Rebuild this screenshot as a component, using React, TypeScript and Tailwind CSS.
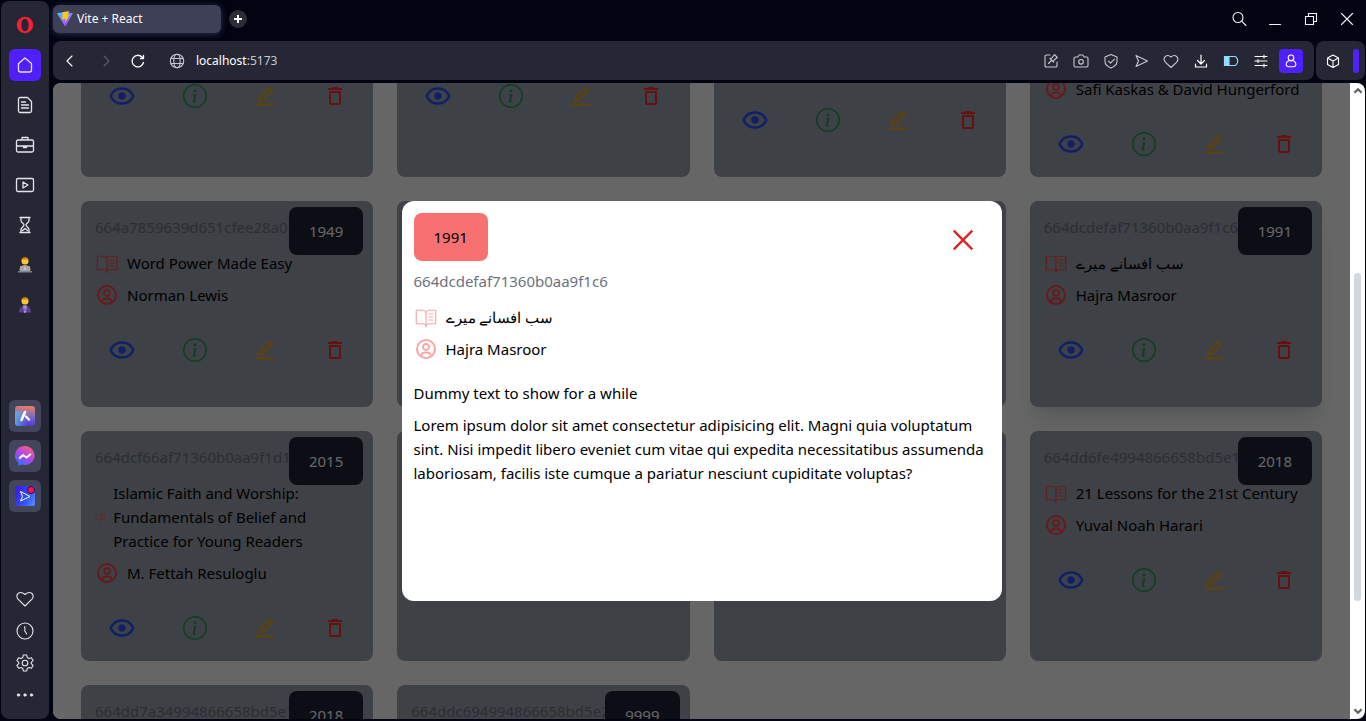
import React, { useLayoutEffect, useRef } from "react";
import { AiOutlineClose, AiOutlineEdit } from "react-icons/ai";
import { BiShow, BiUserCircle } from "react-icons/bi";
import { BsInfoCircle } from "react-icons/bs";
import { MdOutlineDelete } from "react-icons/md";
import { PiBookOpenTextLight } from "react-icons/pi";

type Book = { id: string; year: string; title: string; author: string; raised?: boolean };

const BOOKS: Book[] = [
  { id: "664a74f1639d651cfee289f2", year: "2018", title: "Atomic Habits", author: "James Clear" },
  { id: "664a7593639d651cfee289f6", year: "1936", title: "Deep Work", author: "Cal Newport" },
  { id: "664a7655639d651cfee289fa", year: "1989", title: "How to Win Friends and Influence People", author: "Dale Carnegie" },
  {
    id: "664a76f9639d651cfee289fe",
    year: "2016",
    title: "The Qur'an: A Contemporary Understanding with References to the Bible in English",
    author: "Safi Kaskas & David Hungerford",
  },
  { id: "664a7859639d651cfee28a01", year: "1949", title: "Word Power Made Easy", author: "Norman Lewis" },
  { id: "664a7901639d651cfee28a05", year: "1988", title: "The Alchemist: A Fable About Following Your Dream", author: "Paulo Coelho" },
  { id: "664a79b2639d651cfee28a09", year: "2011", title: "Thinking, Fast and Slow", author: "Daniel Kahneman" },
  { id: "664dcdefaf71360b0aa9f1c6", year: "1991", title: "سب افسانے میرے", author: "Hajra Masroor", raised: true },
  {
    id: "664dcf66af71360b0aa9f1d1",
    year: "2015",
    title: "Islamic Faith and Worship: Fundamentals of Belief and Practice for Young Readers",
    author: "M. Fettah Resuloglu",
  },
  { id: "664dd01faf71360b0aa9f1d5", year: "2014", title: "Sapiens", author: "Yuval Noah Harari" },
  { id: "664dd1c2af71360b0aa9f1d9", year: "2016", title: "Homo Deus", author: "Yuval Noah Harari" },
  { id: "664dd6fe4994866658bd5e10", year: "2018", title: "21 Lessons for the 21st Century", author: "Yuval Noah Harari" },
  { id: "664dd7a34994866658bd5e14", year: "2018", title: "Educated", author: "Tara Westover" },
  { id: "664ddc694994866658bd5e21", year: "9999", title: "Untitled", author: "Unknown" },
];

function Glyph({ children, className = "size-5" }: { children: React.ReactNode; className?: string }) {
  return (
    <svg
      viewBox="0 0 20 20"
      fill="none"
      stroke="currentColor"
      strokeWidth="1.1"
      strokeLinecap="round"
      strokeLinejoin="round"
      aria-hidden="true"
      className={className}
    >
      {children}
    </svg>
  );
}

const HEART = "M10 17 3 10.200C-.5 6 4.500.8 10 5.500 15.500.8 20.500 6 17 10.200Z";

function BookLines({ book, tone }: { book: Book; tone: string }) {
  return (
    <>
      <div className="flex items-center gap-x-2">
        <PiBookOpenTextLight className={`text-2xl ${tone}`} />
        <h2 className="my-1">{book.title}</h2>
      </div>
      <div className="flex items-center gap-x-2">
        <BiUserCircle className={`text-2xl ${tone}`} />
        <h2 className="my-1">{book.author}</h2>
      </div>
    </>
  );
}

function BookCard({ book }: { book: Book }) {
  return (
    <article
      className={`relative rounded-lg border-2 border-[#9ca3af] bg-[#9ca3af] px-3 py-1 ${book.raised ? "shadow-xl" : ""}`}
    >
      <h2 className="absolute top-1 right-2 rounded-lg bg-[#1c2436] px-5 py-3 text-white">{book.year}</h2>
      <h4 className="my-2 text-[#6b7280]">{book.id}</h4>
      <BookLines book={book} tone="text-[#ff4444]" />
      <div className="mt-3 flex items-center justify-between p-3">
        <button aria-label="Quick view">
          <BiShow className="text-3xl text-[#2850ff]" />
        </button>
        <a href="#details" aria-label="Details">
          <BsInfoCircle className="text-2xl text-[#2a9c58]" />
        </a>
        <a href="#edit" aria-label="Edit">
          <AiOutlineEdit className="text-2xl text-[#f5a810]" />
        </a>
        <a href="#delete" aria-label="Delete">
          <MdOutlineDelete className="text-2xl text-[#ff2a2a]" />
        </a>
      </div>
    </article>
  );
}

function BookModal({ book }: { book: Book }) {
  return (
    <div className="absolute inset-0 z-10 flex items-center justify-center bg-black/60">
      <div role="dialog" aria-label={book.title} className="relative h-[400px] w-[600px] rounded-xl bg-white p-3">
        <button aria-label="Close" className="absolute top-6 right-6">
          <AiOutlineClose className="text-3xl text-[#dc2626]" />
        </button>
        <h2 className="w-fit rounded-lg bg-[#f87171] px-5 py-3">{book.year}</h2>
        <h4 className="my-2 text-[#6b7280]">{book.id}</h4>
        <BookLines book={book} tone="text-[#fca5a5]" />
        <p className="mt-4">Dummy text to show for a while</p>
        <p className="my-2">
          Lorem ipsum dolor sit amet consectetur adipisicing elit. Magni quia voluptatum sint. Nisi impedit libero
          eveniet cum vitae qui expedita necessitatibus assumenda laboriosam, facilis iste cumque a pariatur nesciunt
          cupiditate voluptas?
        </p>
      </div>
    </div>
  );
}

function SideButton({ label, className = "", children }: { label: string; className?: string; children: React.ReactNode }) {
  return (
    <button aria-label={label} className={`flex size-8 items-center justify-center rounded-md ${className}`}>
      {children}
    </button>
  );
}

function Sidebar() {
  return (
    <nav aria-label="Browser sidebar" className="mx-px mt-px mb-0.5 flex w-12 shrink-0 flex-col items-center rounded-lg bg-[#252834] pb-2 text-[#e3e5ee]">
      <div className="flex flex-col items-center gap-2 pt-2">
        <SideButton label="Opera">
          <svg viewBox="0 0 20 20" className="size-5" aria-hidden="true">
            <path
              fill="#fa1e37"
              fillRule="evenodd"
              d="M10 1.800a8.200 8.200 0 1 0 0 16.400a8.200 8.200 0 1 0 0-16.400ZM10 3.800c2.300 0 3.600 2.800 3.600 6.200s-1.300 6.200-3.600 6.200-3.600-2.800-3.600-6.200S7.700 3.800 10 3.800Z"
            />
          </svg>
        </SideButton>
        <SideButton label="Home" className="bg-[#4f1fff]">
          <Glyph><path strokeWidth="1.300" d="m10 3 6.500 5.500V15a2 2 0 0 1-2 2h-9a2 2 0 0 1-2-2V8.500Z" /></Glyph>
        </SideButton>
        <SideButton label="Notes">
          <Glyph>
            <path strokeWidth="1.300" d="M5 2.500h7.500l4 4V16a1.500 1.500 0 0 1-1.500 1.500H5A1.500 1.500 0 0 1 3.500 16V4A1.500 1.500 0 0 1 5 2.500ZM6.500 7h4m-4 3h7m-7 3h7" />
          </Glyph>
        </SideButton>
        <SideButton label="Workspace">
          <Glyph>
            <path strokeWidth="1.300" d="M7 5V2.500h6V5M3 5h14a1.500 1.500 0 0 1 1.500 1.500v9A1.500 1.500 0 0 1 17 17H3a1.500 1.500 0 0 1-1.500-1.500v-9A1.500 1.500 0 0 1 3 5Zm-1.500 6h17M8.500 11v1.500h3V11" />
          </Glyph>
        </SideButton>
        <SideButton label="Player">
          <Glyph>
            <path strokeWidth="1.300" d="M3 3.500h14A1.500 1.500 0 0 1 18.500 5v10a1.500 1.500 0 0 1-1.500 1.500H3A1.500 1.500 0 0 1 1.500 15V5A1.500 1.500 0 0 1 3 3.500ZM8 7v6l5-3Z" />
          </Glyph>
        </SideButton>
        <SideButton label="History timer">
          <Glyph>
            <path strokeWidth="1.300" d="M5 2.500h10M5 17.500h10M6 2.500v3c0 2 3 3 3 4.500s-3 2.500-3 4.500v3m8-15v3c0 2-3 3-3 4.500s3 2.500 3 4.500v3M7.500 15.500l2.500-2 2.500 2" />
          </Glyph>
        </SideButton>
        <SideButton label="Technologist workspace">
          <svg viewBox="0 0 16 16" className="size-4" aria-hidden="true">
            <circle cx="8" cy="4" r="3.500" fill="#ffc83d" />
            <path fill="#d67d00" d="M4.500 3.500C4.500-.8 11.500-.8 11.500 3.500L10.500 2.500h-5Z" />
            <path fill="#f9c23c" d="M2.500 13c0-6.500 11-6.500 11 0Z" />
            <path fill="#a5a5ad" d="M3 9h10v6H3Z" />
            <path fill="#82828b" d="M1 14h14v1.500H1Z" />
            <circle cx="8" cy="11.500" r="1" fill="#d8d8dc" />
          </svg>
        </SideButton>
        <SideButton label="Office workspace">
          <svg viewBox="0 0 16 16" className="size-4" aria-hidden="true">
            <circle cx="8" cy="4" r="3.500" fill="#ffc83d" />
            <path fill="#d67d00" d="M4.500 3.500C4.500-.8 11.500-.8 11.500 3.500L10.500 2.500h-5Z" />
            <path fill="#5f3f94" d="M2 15.500C2 6 14 6 14 15.500Z" />
            <path fill="#e8e4f4" d="m6.500 8 1.500 1 1.500-1-.5 7.500H7Z" />
            <path fill="#6b5fc3" d="M7.500 9h1l.5 5-1 1-1-1Z" />
          </svg>
        </SideButton>
      </div>
      <div className="mt-[79px] flex flex-col items-center gap-2">
        <SideButton label="Aria" className="bg-[#43465a]">
          <svg viewBox="0 0 20 20" className="size-5" aria-hidden="true">
            <defs>
              <linearGradient id="aria" x1="0.700" y1="0" x2="0.600" y2="1">
                <stop offset="0" stopColor="#ef7b5a" />
                <stop offset="0.500" stopColor="#7a6fc9" />
                <stop offset="1" stopColor="#5136d8" />
              </linearGradient>
              <linearGradient id="ariaEdge" x1="0" x2="0.600" y1="0" y2="0">
                <stop offset="0" stopColor="#5bb9e8" stopOpacity="0.800" />
                <stop offset="1" stopColor="#5bb9e8" stopOpacity="0" />
              </linearGradient>
            </defs>
            <rect width="20" height="20" rx="3" fill="url(#aria)" />
            <rect y="5" width="20" height="15" rx="3" fill="url(#ariaEdge)" />
            <path d="M10 6 6.500 14" stroke="#fff" strokeWidth="2.600" strokeLinecap="round" />
            <path d="m11 10.500 2.800 3" stroke="#fff" strokeWidth="2.400" strokeLinecap="round" />
          </svg>
        </SideButton>
        <SideButton label="Messenger" className="bg-[#43465a]">
          <svg viewBox="0 0 20 20" className="size-5" aria-hidden="true">
            <defs>
              <linearGradient id="msg" x1="0.800" y1="0" x2="0.200" y2="1">
                <stop offset="0" stopColor="#ff5f78" />
                <stop offset="0.500" stopColor="#b044e8" />
                <stop offset="1" stopColor="#1d7dff" />
              </linearGradient>
            </defs>
            <path fill="url(#msg)" d="M10 0a9.800 9.500 0 1 1-3 18.600L3.500 20v-3.200A9.800 9.500 0 0 1 10 0Z" />
            <path d="m4.800 12 3.200-3 3.500 2.500 3.700-3" fill="none" stroke="#fff" strokeWidth="2" strokeLinejoin="round" strokeLinecap="round" />
          </svg>
        </SideButton>
        <SideButton label="Flow" className="bg-[#43465a]">
          <svg viewBox="0 0 20 20" className="size-5" aria-hidden="true">
            <defs>
              <linearGradient id="flow" x1="0" y1="0.500" x2="1" y2="1">
                <stop offset="0" stopColor="#3a22e8" />
                <stop offset="0.500" stopColor="#2f55f5" />
                <stop offset="1" stopColor="#5e8cff" />
              </linearGradient>
            </defs>
            <rect width="20" height="20" rx="2" fill="url(#flow)" />
            <path d="M5.500 5.500 15 10.500 5.500 15l2-4.500Z" fill="none" stroke="#fff" strokeWidth="1" strokeLinejoin="round" />
            <circle cx="16" cy="4" r="3.500" fill="#ff1450" stroke="#1c1030" strokeWidth="1" />
          </svg>
        </SideButton>
      </div>
      <div className="mt-auto flex flex-col items-center">
        <SideButton label="Favourites"><Glyph><path d={HEART} /></Glyph></SideButton>
        <SideButton label="History">
          <Glyph><circle cx="10" cy="10" r="8" /><path d="M9.800 5.500V10l2 3" /></Glyph>
        </SideButton>
        <SideButton label="Settings">
          <Glyph>
            <circle cx="10" cy="10" r="2.800" />
            <path d="M8.300 2h3.400l.5 2.500 1.800 1 2.400-.8 1.700 2.900-1.900 1.700v1.400l1.900 1.700-1.700 2.900-2.400-.8-1.800 1-.5 2.500H8.300l-.5-2.500-1.800-1-2.400.8-1.700-2.900 1.900-1.700V9.300L1.900 7.600l1.700-2.900 2.400.8 1.800-1Z" />
          </Glyph>
        </SideButton>
        <SideButton label="More">
          <Glyph><g fill="currentColor" strokeWidth="0.600"><circle cx="3.500" cy="10" r="1.300" /><circle cx="10" cy="10" r="1.300" /><circle cx="16.500" cy="10" r="1.300" /></g></Glyph>
        </SideButton>
      </div>
    </nav>
  );
}

function TabBar() {
  return (
    <div className="flex h-[41px] items-center pr-[9px] text-[#f2f3f8]">
      <div className="mb-1 flex h-7 w-[168px] items-center gap-1 rounded-md bg-[#3d4056] px-1 text-xs text-white shadow-[0_1px_6px_#30334a]">
        <svg viewBox="0 0 16 16" className="size-4" aria-hidden="true">
          <defs>
            <linearGradient id="vite" x1="0" y1="0" x2="0.700" y2="1">
              <stop offset="0" stopColor="#41d1ff" />
              <stop offset="1" stopColor="#bd34fe" />
            </linearGradient>
          </defs>
          <path fill="url(#vite)" d="M0 2.300 8 1l8 1.300L8.200 15.800Z" />
          <path fill="#ffc61e" d="m5.500 1.200 6.500-1.200-1.500 4 2.300-.4L8 12l.8-4.200-3.600.7Z" />
        </svg>
        <span>Vite + React</span>
      </div>
      <button aria-label="New tab" className="mb-1 ml-2 flex size-[18px] items-center justify-center rounded-full bg-[#2b2d37]">
        <svg viewBox="0 0 8 8" className="size-2" fill="none" stroke="#fff" strokeWidth="2" aria-hidden="true">
          <path d="M4 0v8M0 4h8" />
        </svg>
      </button>
      <div className="mb-1 ml-auto flex gap-4">
        <button aria-label="Search tabs" className="flex size-5 items-center justify-center">
          <Glyph><circle cx="9" cy="8.500" r="5" /><path d="m12.700 12.200 4.300 4.300" /></Glyph>
        </button>
        <button aria-label="Minimize" className="flex size-5 items-center justify-center">
          <Glyph><path d="M4.500 15.500h11" /></Glyph>
        </button>
        <button aria-label="Restore" className="flex size-5 items-center justify-center">
          <Glyph><path strokeLinejoin="miter" d="M4.500 7.500h8v8h-8ZM7.500 7.500v-3h8v8h-3" /></Glyph>
        </button>
        <button aria-label="Close window" className="flex size-5 items-center justify-center">
          <Glyph><path d="m4.500 4.500 11 11m0-11-11 11" /></Glyph>
        </button>
      </div>
    </div>
  );
}

function AddressBar() {
  return (
    <div className="flex h-[39px] gap-0.5 pr-px text-[#c6c9d4]">
      <div className="flex flex-1 items-center rounded-lg bg-[#252834] pr-[11px] pl-[7px]">
        <div className="flex gap-3.5">
          <button aria-label="Back" className="text-white"><Glyph><path d="M12 5 7 10l5 5" /></Glyph></button>
          <button aria-label="Forward" className="text-[#5d606c]"><Glyph><path d="m10 5 5 5-5 5" /></Glyph></button>
          <button aria-label="Reload" className="text-white">
            <Glyph><path strokeWidth="1.300" d="M15.500 11.500A5.800 5.800 0 1 1 14 6l1.500 1.500M15.500 4.500v3h-3" /></Glyph>
          </button>
        </div>
        <Glyph className="ml-[19px] size-5">
          <circle cx="10" cy="10" r="6.700" /><ellipse cx="10" cy="10" rx="3.200" ry="6.700" /><path d="M4 7.500h12M4 12.500h12" />
        </Glyph>
        <a href="#location" aria-label="Address" className="ml-[9px] text-xs">
          <span className="text-white">localhost</span>:5173
        </a>
        <div className="ml-auto flex items-center gap-2">
          <div className="flex gap-2.5">
            <Glyph>
              <path d="M9 4H5.500A1.500 1.500 0 0 0 4 5.500V15a1 1 0 0 0 1 1h10a1 1 0 0 0 1-1v-4M7.500 12.500l2.500-2.500M9 7.500l3.500 3.500.8-2.200 3-2.300-2.800-2.800-2.300 3Z" />
            </Glyph>
            <Glyph>
              <path d="M4.500 6h2.300l1.400-2h3.600l1.400 2h2.300A1.500 1.500 0 0 1 17 7.500v7a1.500 1.500 0 0 1-1.500 1.500h-11A1.500 1.500 0 0 1 3 14.500v-7A1.500 1.500 0 0 1 4.500 6Z" /><circle cx="10" cy="10.800" r="2.300" />
            </Glyph>
            <Glyph><path d="M10 3.500 16 6v4.500c0 3-2.500 5-6 6.500-3.500-1.500-6-3.500-6-6.500V6Zm-2.500 6.700 2 2 4-4" /></Glyph>
            <Glyph><path d="M5 4.500 16.500 10 5 15.500 7.500 10Z" /></Glyph>
            <Glyph><path d="m10 16.500-5.500-5.200C1 7.500 5.500 2 10 6c4.500-4 9 1.500 5.500 5.300Z" /></Glyph>
            <Glyph><path stroke="#fff" strokeWidth="1.200" d="M10 4v9m-3.500-3.500L10 13l3.500-3.500M4.500 13v3h11v-3" /></Glyph>
            <Glyph>
              <g stroke="#8fdcff">
                <path d="M3.500 5.500h10.500a1.500 1.500 0 0 1 1.200.7c1.800 2.300 1.800 5.300 0 7.600a1.500 1.500 0 0 1-1.200.7H3.500Z" />
                <path fill="#8fdcff" d="M3.500 5.500h4.500v9H3.500Z" />
              </g>
            </Glyph>
            <Glyph><path stroke="#fff" d="M4 5.500h12M4 10h12M4 14.500h12M13 4v3M7 8.500v3m6 1.500v3" /></Glyph>
          </div>
          <button aria-label="Profile" className="flex size-6 items-center justify-center rounded bg-[#4f1fff] text-white">
            <Glyph><circle cx="10" cy="6.800" r="2.800" /><path d="M7.500 9.800h5c3 1.500 3.500 6-.5 6H8c-4 0-3.500-4.500-.5-6Z" /></Glyph>
          </button>
        </div>
      </div>
      <div className="flex w-[49px] items-center justify-between rounded-lg bg-[#252834] pr-1.5 pl-[7px] text-white">
        <Glyph><path d="m10 4 5.500 3v6.500L10 16.500l-5.500-3V7Zm0 6 5.500-3M10 10v6.500M10 10 4.500 7" /></Glyph>
        <span className="h-6 w-1.5 rounded-sm bg-[#4f1fff]" />
      </div>
    </div>
  );
}

function Scrollbar() {
  return (
    <div className="flex w-[15px] shrink-0 flex-col items-center bg-white text-[#606060]">
      <Glyph className="mt-0.5 size-3"><path strokeWidth="3.500" strokeLinecap="butt" strokeLinejoin="miter" d="m4 13 6-6 6 6" /></Glyph>
      <span className="mt-44 h-[328px] w-[7px] rounded bg-[#d0d8e0]" />
      <Glyph className="mt-auto mb-0.5 size-3"><path strokeWidth="3.500" strokeLinecap="butt" strokeLinejoin="miter" d="m4 7 6 6 6-6" /></Glyph>
    </div>
  );
}

export default function App() {
  const scroller = useRef<HTMLDivElement>(null);
  const grid = useRef<HTMLElement>(null);

  useLayoutEffect(() => {
    if (scroller.current && grid.current) {
      scroller.current.scrollTop = grid.current.offsetTop + 136;
    }
  }, []);

  return (
    <div className="flex h-screen overflow-hidden bg-[#020412] font-['Noto_Sans','Open_Sans',sans-serif]">
      <Sidebar />
      <div className="ml-[3px] flex min-w-0 flex-1 flex-col">
        <TabBar />
        <AddressBar />
        <div className="mt-[3px] mr-px mb-0.5 flex min-h-0 flex-1 overflow-hidden rounded-lg">
          <main className="relative min-w-0 flex-1 bg-white text-[15px] leading-6 text-black">
            <div ref={scroller} className="relative h-full overflow-y-auto p-7 [scrollbar-width:none]">
              <section ref={grid} className="grid grid-cols-4 gap-6">
                {BOOKS.map((book) => (
                  <BookCard key={book.id} book={book} />
                ))}
              </section>
            </div>
            <BookModal book={BOOKS[7]} />
          </main>
          <Scrollbar />
        </div>
      </div>
    </div>
  );
}
